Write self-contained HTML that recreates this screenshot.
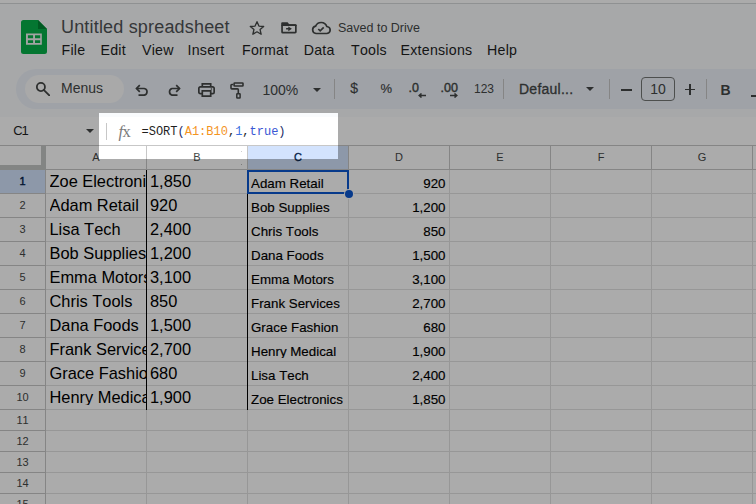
<!DOCTYPE html>
<html><head><meta charset="utf-8">
<style>
*{margin:0;padding:0;box-sizing:border-box}
html,body{width:756px;height:504px;overflow:hidden;background:#fff;font-family:"Liberation Sans",sans-serif;color:#1f1f1f;font-kerning:none}
.a{position:absolute}
#app{position:absolute;left:0;top:0;width:756px;height:504px;overflow:hidden}
#top{left:0;top:4px;width:756px;height:141px;background:#f9fbfd}
#topline{left:0;top:3px;width:756px;height:1px;background:#d6d8da}
.title{left:61px;top:16.6px;font-size:18px;letter-spacing:0.18px;color:#505356;white-space:nowrap;line-height:normal}
.menu{top:41.8px;font-size:14.2px;letter-spacing:0.25px;color:#1f1f1f;white-space:nowrap}
.saved{left:338px;top:20.5px;font-size:12.5px;color:#444746;white-space:nowrap}
#tb{left:16px;top:69px;width:800px;height:40px;border-radius:20px;background:#edf2fa}
#search{left:25px;top:75px;width:99px;height:28px;border-radius:14px;background:#fcfcfc}
.tbt{font-size:14px;color:#444746;white-space:nowrap}
.sep{width:1px;height:20px;background:#c7c7c7;top:79px}
#fbar{left:0;top:109px;width:756px;height:36px;background:#f9fbfd}
#fbrow{left:0;top:113px;width:756px;height:32px;background:#fff}
.grid{left:0;top:145px;width:756px;height:359px;background:#fff}
.hl{background:#c0c0c0}
.vl{width:1px;background:#e1e1e1}
.hdr{font-size:11px;color:#444746;text-align:center}
.cell{font-size:13.33px;color:#000;white-space:nowrap;overflow:hidden;-webkit-text-stroke:.15px #000}
.big{font-size:16px;color:#000;white-space:nowrap;overflow:hidden}
#ov{left:99px;top:113px;width:239px;height:46px;box-shadow:0 0 0 3000px rgba(0,0,0,.33)}
</style></head><body><div id="app">
<div class="a" id="top"></div>
<div class="a" id="topline"></div>

<!-- logo -->
<svg class="a" style="left:21px;top:20px" width="26" height="34" viewBox="0 0 26 34">
<path d="M2.5 0H17L26 9V31.5A2.5 2.5 0 0 1 23.5 34H2.5A2.5 2.5 0 0 1 0 31.5V2.5A2.5 2.5 0 0 1 2.5 0Z" fill="#06b04a"/>
<path d="M17 0L26 9H17Z" fill="#008634"/>
<path d="M5 13.5h15.8v11.25H5z" fill="#f4f4f4"/>
<path d="M6.9 15.2h5.2v3.1H6.9zM14 15.2h5.2v3.1H14zM6.9 20.2h5.2v2.9H6.9zM14 20.2h5.2v2.9H14z" fill="#06b04a"/>
</svg>

<div class="a title">Untitled spreadsheet</div>
<!-- star -->
<svg class="a" style="left:249px;top:20px" width="16" height="16" viewBox="0 0 24 24"><path d="M12 2.5l2.9 6.6 7.1.6-5.4 4.7 1.6 7-6.2-3.7-6.2 3.7 1.6-7L2 9.7l7.1-.6z" fill="none" stroke="#444746" stroke-width="2" stroke-linejoin="round"/></svg>
<!-- folder -->
<svg class="a" style="left:280px;top:21px" width="18" height="14" viewBox="0 0 18 14"><path d="M2.05 4.2V10.9A.75 .75 0 0 0 2.8 11.65H15.1A.75 .75 0 0 0 15.85 10.9V4.8A.75 .75 0 0 0 15.1 4.05H2.05" fill="none" stroke="#444746" stroke-width="1.7"/><path d="M1.2 4.9V2.3A1.1 1.1 0 0 1 2.3 1.2H7.6L9.2 3.2H15.6A1.1 1.1 0 0 1 16.7 4.3V4.9Z" fill="#444746"/><path d="M6.1 7H8.4V8.6H6.1Z M8.3 5.4L11.9 7.8L8.3 10.2Z" fill="#444746"/></svg>
<!-- cloud -->
<svg class="a" style="left:311px;top:21px" width="20" height="14" viewBox="0 0 20 14"><path d="M5 12.5H15.5A3.5 3.5 0 0 0 15.8 5.5A6 6 0 0 0 4.6 5.2A3.7 3.7 0 0 0 5 12.5Z" fill="none" stroke="#444746" stroke-width="1.7"/><path d="M7.3 8L9.2 9.9L12.7 6.4" fill="none" stroke="#444746" stroke-width="1.7"/></svg>
<div class="a saved">Saved to Drive</div>

<div class="a menu" style="left:61.5px">File</div>
<div class="a menu" style="left:100.5px">Edit</div>
<div class="a menu" style="left:142px">View</div>
<div class="a menu" style="left:187.5px">Insert</div>
<div class="a menu" style="left:242px">Format</div>
<div class="a menu" style="left:303.7px">Data</div>
<div class="a menu" style="left:351px">Tools</div>
<div class="a menu" style="left:400.5px">Extensions</div>
<div class="a menu" style="left:487px">Help</div>

<!-- toolbar -->
<div class="a" id="tb"></div>
<div class="a" id="search"></div>
<svg class="a" style="left:35px;top:82px" width="15" height="14" viewBox="0 0 15 14"><circle cx="5.9" cy="5" r="4.05" fill="none" stroke="#444746" stroke-width="1.8"/><path d="M8.7 7.9L14.3 13.4" stroke="#444746" stroke-width="1.8" stroke-linecap="round"/></svg>
<div class="a tbt" style="left:61px;top:80px">Menus</div>

<!-- undo/redo -->
<svg class="a" style="left:135px;top:84px" width="14" height="12" viewBox="0 0 14 12"><path d="M1.5 4.5H9.2A3.4 3.4 0 0 1 9.2 11.2H3.5" fill="none" stroke="#444746" stroke-width="1.7"/><path d="M4.8 1.2L1.5 4.5L4.8 7.8" fill="none" stroke="#444746" stroke-width="1.7"/></svg>
<svg class="a" style="left:166.5px;top:84px" width="14" height="12" viewBox="0 0 14 12"><path d="M12.5 4.5H5A3.5 3.5 0 0 0 5 11.2H10.5" fill="none" stroke="#444746" stroke-width="1.7"/><path d="M9.2 1.2L12.5 4.5L9.2 7.8" fill="none" stroke="#444746" stroke-width="1.7"/></svg>
<!-- print -->
<svg class="a" style="left:197.5px;top:82.8px" width="17" height="14" viewBox="0 0 17 14"><path d="M4.3 3.9V.85H12.7V3.9" fill="none" stroke="#444746" stroke-width="1.7"/><path d="M4.3 10.6H2.3A1.45 1.45 0 0 1 .85 9.15V5.35A1.45 1.45 0 0 1 2.3 3.9H14.7A1.45 1.45 0 0 1 16.15 5.35V9.15A1.45 1.45 0 0 1 14.7 10.6H12.7" fill="none" stroke="#444746" stroke-width="1.7"/><path d="M4.3 7.9H12.7V13.15H4.3Z" fill="none" stroke="#444746" stroke-width="1.7"/><circle cx="13.4" cy="6" r=".8" fill="#444746"/></svg>
<!-- paint format -->
<svg class="a" style="left:229px;top:81px" width="16" height="18" viewBox="0 0 16 18"><rect x="5.1" y="2" width="8.9" height="3" rx=".6" fill="none" stroke="#444746" stroke-width="1.6"/><path d="M4.3 3.5H2.8A.8 .8 0 0 0 2 4.3V7.1A.8 .8 0 0 0 2.8 7.9H8.5A.8 .8 0 0 1 9.3 8.7V12.2" fill="none" stroke="#444746" stroke-width="1.6"/><rect x="7.8" y="12.8" width="3.3" height="4.3" rx=".5" fill="none" stroke="#444746" stroke-width="1.5"/></svg>
<div class="a tbt" style="left:262.5px;top:82px">100%</div>
<svg class="a" style="left:313px;top:88px" width="8" height="4" viewBox="0 0 8 4"><path d="M0 0H8L4 4Z" fill="#444746"/></svg>
<div class="a sep" style="left:334px"></div>
<div class="a tbt" style="left:350.2px;top:80.2px;font-size:14px;-webkit-text-stroke:.15px #444746">$</div>
<div class="a tbt" style="left:380.6px;top:80.6px;font-size:13px;-webkit-text-stroke:.15px #444746">%</div>
<div class="a tbt" style="left:408.5px;top:80.5px;font-size:12.5px;-webkit-text-stroke:.4px #444746">.0</div>
<svg class="a" style="left:418px;top:92.5px" width="8" height="5" viewBox="0 0 8 5"><path d="M8 2.5H1.5M3.5 .5L1.2 2.5L3.5 4.5" fill="none" stroke="#444746" stroke-width="1.5"/></svg>
<div class="a tbt" style="left:440.5px;top:80.5px;font-size:12.5px;-webkit-text-stroke:.4px #444746">.00</div>
<svg class="a" style="left:450px;top:92.5px" width="8" height="5" viewBox="0 0 8 5"><path d="M0 2.5H6.5M4.5 .5L6.8 2.5L4.5 4.5" fill="none" stroke="#444746" stroke-width="1.5"/></svg>
<div class="a tbt" style="left:474px;top:82px;font-size:12px">123</div>
<div class="a sep" style="left:503px"></div>
<div class="a tbt" style="left:519px;top:80.5px;letter-spacing:.25px;-webkit-text-stroke:.3px #444746">Defaul...</div>
<svg class="a" style="left:586.3px;top:87.2px" width="8" height="4" viewBox="0 0 8 4"><path d="M0 0H8L4 4Z" fill="#444746"/></svg>
<div class="a sep" style="left:609px"></div>
<div class="a" style="left:621px;top:89.2px;width:10.5px;height:1.4px;background:#444746"></div>
<div class="a" style="left:641px;top:77px;width:34px;height:24px;border:1px solid #747775;border-radius:4px"></div>
<div class="a tbt" style="left:641px;top:81px;width:34px;text-align:center;font-size:14px">10</div>
<div class="a" style="left:684.8px;top:88.6px;width:10.5px;height:1.5px;background:#444746"></div>
<div class="a" style="left:689.3px;top:84.1px;width:1.5px;height:10.5px;background:#444746"></div>
<div class="a sep" style="left:706px"></div>
<div class="a tbt" style="left:720.5px;top:81.5px;font-weight:bold;font-size:14px">B</div>
<div class="a" style="left:751px;top:95px;width:8px;height:1.6px;background:#444746"></div>

<!-- GRID -->
<div class="a" style="left:0;top:145px;width:756px;height:359px;background:#fff"></div>
<div class="a" style="left:0;top:145px;width:756px;height:24px;background:#fff"></div>
<div class="a" style="left:0;top:169px;width:45px;height:335px;background:#fff"></div>
<div class="a" style="left:248px;top:145px;width:100px;height:24px;background:#d3e3fd"></div>
<div class="a" style="left:0;top:170px;width:45px;height:23px;background:#d3e3fd"></div>
<div class="a" style="left:46px;top:193px;width:710px;height:1px;background:#e1e1e1"></div>
<div class="a" style="left:0;top:193px;width:45px;height:1px;background:#c7c7c7"></div>
<div class="a" style="left:46px;top:217px;width:710px;height:1px;background:#e1e1e1"></div>
<div class="a" style="left:0;top:217px;width:45px;height:1px;background:#c7c7c7"></div>
<div class="a" style="left:46px;top:241px;width:710px;height:1px;background:#e1e1e1"></div>
<div class="a" style="left:0;top:241px;width:45px;height:1px;background:#c7c7c7"></div>
<div class="a" style="left:46px;top:265px;width:710px;height:1px;background:#e1e1e1"></div>
<div class="a" style="left:0;top:265px;width:45px;height:1px;background:#c7c7c7"></div>
<div class="a" style="left:46px;top:289px;width:710px;height:1px;background:#e1e1e1"></div>
<div class="a" style="left:0;top:289px;width:45px;height:1px;background:#c7c7c7"></div>
<div class="a" style="left:46px;top:313px;width:710px;height:1px;background:#e1e1e1"></div>
<div class="a" style="left:0;top:313px;width:45px;height:1px;background:#c7c7c7"></div>
<div class="a" style="left:46px;top:337px;width:710px;height:1px;background:#e1e1e1"></div>
<div class="a" style="left:0;top:337px;width:45px;height:1px;background:#c7c7c7"></div>
<div class="a" style="left:46px;top:361px;width:710px;height:1px;background:#e1e1e1"></div>
<div class="a" style="left:0;top:361px;width:45px;height:1px;background:#c7c7c7"></div>
<div class="a" style="left:46px;top:385px;width:710px;height:1px;background:#e1e1e1"></div>
<div class="a" style="left:0;top:385px;width:45px;height:1px;background:#c7c7c7"></div>
<div class="a" style="left:46px;top:409px;width:710px;height:1px;background:#e1e1e1"></div>
<div class="a" style="left:0;top:409px;width:45px;height:1px;background:#c7c7c7"></div>
<div class="a" style="left:46px;top:430px;width:710px;height:1px;background:#e1e1e1"></div>
<div class="a" style="left:0;top:430px;width:45px;height:1px;background:#c7c7c7"></div>
<div class="a" style="left:46px;top:451px;width:710px;height:1px;background:#e1e1e1"></div>
<div class="a" style="left:0;top:451px;width:45px;height:1px;background:#c7c7c7"></div>
<div class="a" style="left:46px;top:472px;width:710px;height:1px;background:#e1e1e1"></div>
<div class="a" style="left:0;top:472px;width:45px;height:1px;background:#c7c7c7"></div>
<div class="a" style="left:46px;top:493px;width:710px;height:1px;background:#e1e1e1"></div>
<div class="a" style="left:0;top:493px;width:45px;height:1px;background:#c7c7c7"></div>
<div class="a" style="left:146px;top:170px;width:1px;height:334px;background:#e1e1e1"></div>
<div class="a" style="left:146px;top:145px;width:1px;height:24px;background:#c7c7c7"></div>
<div class="a" style="left:247px;top:170px;width:1px;height:334px;background:#e1e1e1"></div>
<div class="a" style="left:247px;top:145px;width:1px;height:24px;background:#c7c7c7"></div>
<div class="a" style="left:348px;top:170px;width:1px;height:334px;background:#e1e1e1"></div>
<div class="a" style="left:348px;top:145px;width:1px;height:24px;background:#c7c7c7"></div>
<div class="a" style="left:449px;top:170px;width:1px;height:334px;background:#e1e1e1"></div>
<div class="a" style="left:449px;top:145px;width:1px;height:24px;background:#c7c7c7"></div>
<div class="a" style="left:550px;top:170px;width:1px;height:334px;background:#e1e1e1"></div>
<div class="a" style="left:550px;top:145px;width:1px;height:24px;background:#c7c7c7"></div>
<div class="a" style="left:651px;top:170px;width:1px;height:334px;background:#e1e1e1"></div>
<div class="a" style="left:651px;top:145px;width:1px;height:24px;background:#c7c7c7"></div>
<div class="a" style="left:752px;top:170px;width:1px;height:334px;background:#e1e1e1"></div>
<div class="a" style="left:752px;top:145px;width:1px;height:24px;background:#c7c7c7"></div>
<div class="a" style="left:0;top:169px;width:756px;height:1px;background:#c7c7c7"></div>
<div class="a" style="left:45px;top:145px;width:1px;height:359px;background:#c7c7c7"></div>
<div class="a" style="left:41px;top:145px;width:5px;height:25px;background:#c4c7c5"></div>
<div class="a" style="left:0;top:165px;width:46px;height:5px;background:#c4c7c5"></div>
<div class="a hdr" style="left:46px;top:150px;width:100px;line-height:14px;color:#444746;font-weight:normal">A</div>
<div class="a hdr" style="left:147px;top:150px;width:100px;line-height:14px;color:#444746;font-weight:normal">B</div>
<div class="a hdr" style="left:248px;top:150px;width:100px;line-height:14px;color:#041e49;font-weight:normal;-webkit-text-stroke:.3px #041e49">C</div>
<div class="a hdr" style="left:349px;top:150px;width:100px;line-height:14px;color:#444746;font-weight:normal">D</div>
<div class="a hdr" style="left:450px;top:150px;width:100px;line-height:14px;color:#444746;font-weight:normal">E</div>
<div class="a hdr" style="left:551px;top:150px;width:100px;line-height:14px;color:#444746;font-weight:normal">F</div>
<div class="a hdr" style="left:652px;top:150px;width:100px;line-height:14px;color:#444746;font-weight:normal">G</div>
<div class="a hdr" style="left:0;top:170px;width:45px;height:23px;line-height:23px;color:#041e49;font-weight:normal;-webkit-text-stroke:.4px #041e49">1</div>
<div class="a hdr" style="left:0;top:194px;width:45px;height:23px;line-height:23px;color:#444746;font-weight:normal">2</div>
<div class="a hdr" style="left:0;top:218px;width:45px;height:23px;line-height:23px;color:#444746;font-weight:normal">3</div>
<div class="a hdr" style="left:0;top:242px;width:45px;height:23px;line-height:23px;color:#444746;font-weight:normal">4</div>
<div class="a hdr" style="left:0;top:266px;width:45px;height:23px;line-height:23px;color:#444746;font-weight:normal">5</div>
<div class="a hdr" style="left:0;top:290px;width:45px;height:23px;line-height:23px;color:#444746;font-weight:normal">6</div>
<div class="a hdr" style="left:0;top:314px;width:45px;height:23px;line-height:23px;color:#444746;font-weight:normal">7</div>
<div class="a hdr" style="left:0;top:338px;width:45px;height:23px;line-height:23px;color:#444746;font-weight:normal">8</div>
<div class="a hdr" style="left:0;top:362px;width:45px;height:23px;line-height:23px;color:#444746;font-weight:normal">9</div>
<div class="a hdr" style="left:0;top:386px;width:45px;height:23px;line-height:23px;color:#444746;font-weight:normal">10</div>
<div class="a hdr" style="left:0;top:410px;width:45px;height:20px;line-height:20px;color:#444746;font-weight:normal">11</div>
<div class="a hdr" style="left:0;top:431px;width:45px;height:20px;line-height:20px;color:#444746;font-weight:normal">12</div>
<div class="a hdr" style="left:0;top:452px;width:45px;height:20px;line-height:20px;color:#444746;font-weight:normal">13</div>
<div class="a hdr" style="left:0;top:473px;width:45px;height:20px;line-height:20px;color:#444746;font-weight:normal">14</div>
<div class="a hdr" style="left:0;top:494px;width:45px;height:20px;line-height:20px;color:#444746;font-weight:normal">15</div>
<div class="a big" style="left:49.5px;top:172.8px;width:96.5px;line-height:16px;font-size:16.4px">Zoe Electronics</div>
<div class="a big" style="left:150px;top:172.8px;width:96px;line-height:16px;font-size:16.4px">1,850</div>
<div class="a cell" style="left:251px;top:176.6px;width:96px;line-height:13.33px">Adam Retail</div>
<div class="a cell" style="left:350.5px;top:176.6px;width:95px;line-height:13.33px;text-align:right">920</div>
<div class="a big" style="left:49.5px;top:196.8px;width:96.5px;line-height:16px;font-size:16.4px">Adam Retail</div>
<div class="a big" style="left:150px;top:196.8px;width:96px;line-height:16px;font-size:16.4px">920</div>
<div class="a cell" style="left:251px;top:200.6px;width:96px;line-height:13.33px">Bob Supplies</div>
<div class="a cell" style="left:350.5px;top:200.6px;width:95px;line-height:13.33px;text-align:right">1,200</div>
<div class="a big" style="left:49.5px;top:220.8px;width:96.5px;line-height:16px;font-size:16.4px">Lisa Tech</div>
<div class="a big" style="left:150px;top:220.8px;width:96px;line-height:16px;font-size:16.4px">2,400</div>
<div class="a cell" style="left:251px;top:224.6px;width:96px;line-height:13.33px">Chris Tools</div>
<div class="a cell" style="left:350.5px;top:224.6px;width:95px;line-height:13.33px;text-align:right">850</div>
<div class="a big" style="left:49.5px;top:244.8px;width:96.5px;line-height:16px;font-size:16.4px">Bob Supplies</div>
<div class="a big" style="left:150px;top:244.8px;width:96px;line-height:16px;font-size:16.4px">1,200</div>
<div class="a cell" style="left:251px;top:248.6px;width:96px;line-height:13.33px">Dana Foods</div>
<div class="a cell" style="left:350.5px;top:248.6px;width:95px;line-height:13.33px;text-align:right">1,500</div>
<div class="a big" style="left:49.5px;top:268.8px;width:96.5px;line-height:16px;font-size:16.4px">Emma Motors</div>
<div class="a big" style="left:150px;top:268.8px;width:96px;line-height:16px;font-size:16.4px">3,100</div>
<div class="a cell" style="left:251px;top:272.6px;width:96px;line-height:13.33px">Emma Motors</div>
<div class="a cell" style="left:350.5px;top:272.6px;width:95px;line-height:13.33px;text-align:right">3,100</div>
<div class="a big" style="left:49.5px;top:292.8px;width:96.5px;line-height:16px;font-size:16.4px">Chris Tools</div>
<div class="a big" style="left:150px;top:292.8px;width:96px;line-height:16px;font-size:16.4px">850</div>
<div class="a cell" style="left:251px;top:296.6px;width:96px;line-height:13.33px">Frank Services</div>
<div class="a cell" style="left:350.5px;top:296.6px;width:95px;line-height:13.33px;text-align:right">2,700</div>
<div class="a big" style="left:49.5px;top:316.8px;width:96.5px;line-height:16px;font-size:16.4px">Dana Foods</div>
<div class="a big" style="left:150px;top:316.8px;width:96px;line-height:16px;font-size:16.4px">1,500</div>
<div class="a cell" style="left:251px;top:320.6px;width:96px;line-height:13.33px">Grace Fashion</div>
<div class="a cell" style="left:350.5px;top:320.6px;width:95px;line-height:13.33px;text-align:right">680</div>
<div class="a big" style="left:49.5px;top:340.8px;width:96.5px;line-height:16px;font-size:16.4px">Frank Services</div>
<div class="a big" style="left:150px;top:340.8px;width:96px;line-height:16px;font-size:16.4px">2,700</div>
<div class="a cell" style="left:251px;top:344.6px;width:96px;line-height:13.33px">Henry Medical</div>
<div class="a cell" style="left:350.5px;top:344.6px;width:95px;line-height:13.33px;text-align:right">1,900</div>
<div class="a big" style="left:49.5px;top:364.8px;width:96.5px;line-height:16px;font-size:16.4px">Grace Fashion</div>
<div class="a big" style="left:150px;top:364.8px;width:96px;line-height:16px;font-size:16.4px">680</div>
<div class="a cell" style="left:251px;top:368.6px;width:96px;line-height:13.33px">Lisa Tech</div>
<div class="a cell" style="left:350.5px;top:368.6px;width:95px;line-height:13.33px;text-align:right">2,400</div>
<div class="a big" style="left:49.5px;top:388.8px;width:96.5px;line-height:16px;font-size:16.4px">Henry Medical</div>
<div class="a big" style="left:150px;top:388.8px;width:96px;line-height:16px;font-size:16.4px">1,900</div>
<div class="a cell" style="left:251px;top:392.6px;width:96px;line-height:13.33px">Zoe Electronics</div>
<div class="a cell" style="left:350.5px;top:392.6px;width:95px;line-height:13.33px;text-align:right">1,850</div>
<div class="a" style="left:241px;top:151px;width:1px;height:1px;background:#cfcfcf"></div>
<div class="a" style="left:241px;top:164px;width:1px;height:1px;background:#b8b8b8"></div>
<div class="a" style="left:146px;top:170px;width:1px;height:240px;background:#000"></div>
<div class="a" style="left:247px;top:170px;width:1px;height:240px;background:#000"></div>
<div class="a" style="left:247px;top:170px;width:102px;height:24px;border:2px solid #0b57d0"></div>
<div class="a" style="left:344.5px;top:189.5px;width:8px;height:8px;border-radius:50%;background:#0b57d0;box-shadow:0 0 0 1px #fff"></div>
<!-- /GRID -->
<!-- formula bar -->
<div class="a" id="fbrow"></div>
<div class="a" style="left:0;top:109px;width:756px;height:8px;background:#f9fbfd"></div>
<div class="a" style="left:13.2px;top:122.6px;font-size:13px;letter-spacing:-1px;color:#1f1f1f">C1</div>
<svg class="a" style="left:86px;top:129px" width="8" height="4" viewBox="0 0 8 4"><path d="M0 0H8L4 4Z" fill="#444746"/></svg>
<div class="a" style="left:106px;top:123px;width:1px;height:17px;background:#c7c7c7"></div>
<div class="a" style="left:118.5px;top:122px;font-family:'Liberation Serif',serif;font-size:16.5px;color:#7a7a7a;white-space:nowrap"><i>f</i><span style="margin-left:-0.5px">x</span></div>
<div class="a" style="left:141.5px;top:125px;font-family:'Liberation Mono',monospace;font-size:12px;color:#1f1f1f;white-space:nowrap">=SORT<span style="color:#1c2a66">(</span><span style="color:#f4951f">A1:B10</span>,<span style="color:#3b6fe0">1</span>,<span style="color:#3a57d4">true</span><span style="color:#1c2a66">)</span></div>
<div class="a" style="left:0;top:145px;width:756px;height:1px;background:#c7c7c7"></div>

</div>
<div class="a" id="ov"></div>
</body></html>
